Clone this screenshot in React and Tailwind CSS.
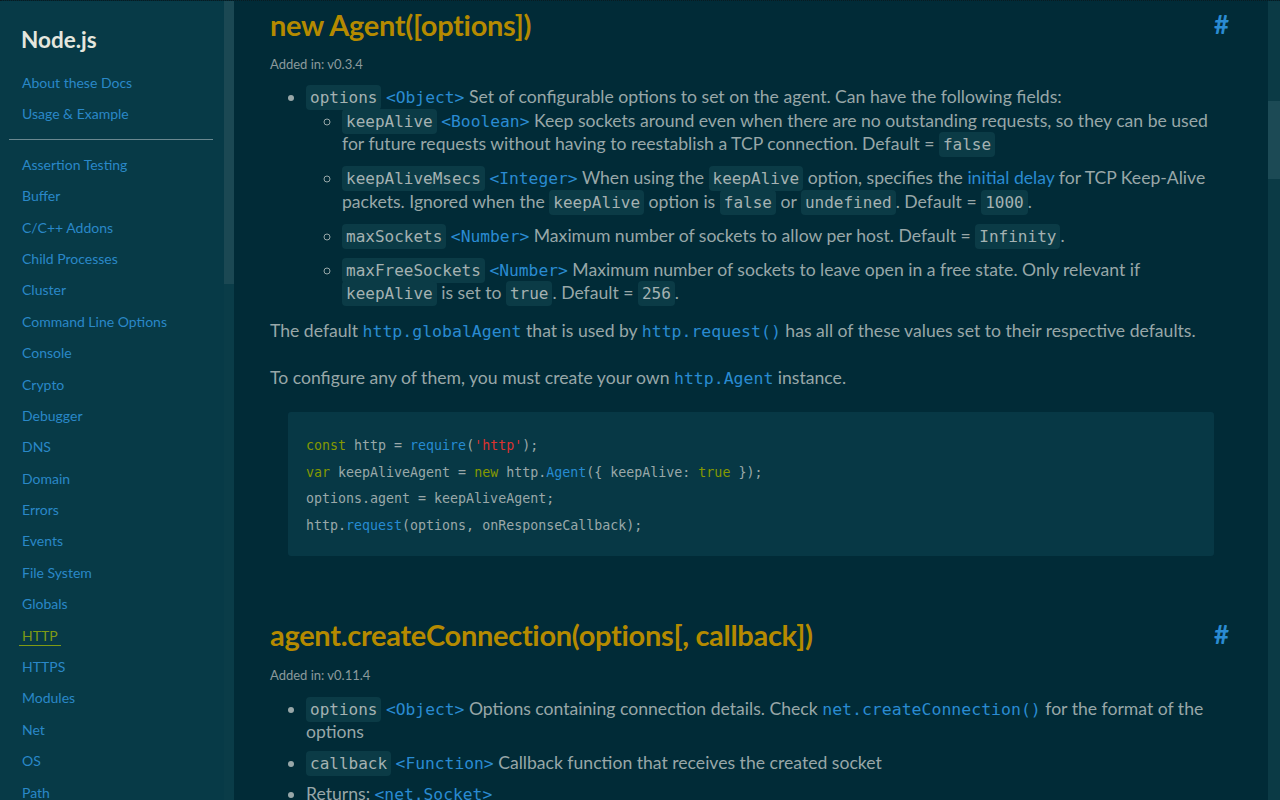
import React from "react";

const sans = { fontFamily: "Lato, 'Open Sans', sans-serif" };

const navTop = ["About these Docs", "Usage & Example"];
const navModules = [
  "Assertion Testing",
  "Buffer",
  "C/C++ Addons",
  "Child Processes",
  "Cluster",
  "Command Line Options",
  "Console",
  "Crypto",
  "Debugger",
  "DNS",
  "Domain",
  "Errors",
  "Events",
  "File System",
  "Globals",
  "HTTP",
  "HTTPS",
  "Modules",
  "Net",
  "OS",
  "Path",
];

function C({ children }) {
  return (
    <code className="rounded-sm bg-[#0b3b46] px-[4px] py-[3px] font-['DejaVu_Sans_Mono',monospace] text-[16px] leading-[16px] text-[#a5b2b2]">
      {children}
    </code>
  );
}

function T({ children }) {
  return (
    <span className="font-['DejaVu_Sans_Mono',monospace] text-[16.3px] leading-[16px] text-[#2a8bd2]">
      &lt;{children}&gt;
    </span>
  );
}

function L({ children }) {
  return (
    <span className="font-['DejaVu_Sans_Mono',monospace] text-[16.5px] leading-[16px] text-[#2a8bd2]">
      {children}
    </span>
  );
}

function Heading({ children }) {
  return (
    <div className="flex items-center justify-between">
      <h2 className="text-[29px] font-bold leading-[44px] tracking-[-0.3px] text-[#b58a00]">
        {children}
      </h2>
      <span className="mr-[3px] text-[26px] font-bold text-[#2a8bd2]">#</span>
    </div>
  );
}

function Sidebar() {
  return (
    <div className="flex w-[234px] shrink-0 bg-[#073a47]">
      <div className="w-[224px] shrink-0 pt-[24px]">
        <div className="pl-[21px] text-[22.5px] font-bold leading-[30px] text-[#e4e6de]">Node.js</div>
        <ul className="mt-[18px] pl-[22px]">
          {navTop.map((n) => (
            <li key={n} className="h-[31.4px] text-[14px] leading-[20px] text-[#2a88c8]">
              {n}
            </li>
          ))}
        </ul>
        <div className="ml-[9px] mr-[11px] mt-[3px] mb-[15px] h-px bg-[#6a8890]" />
        <ul className="pl-[22px]">
          {navModules.map((n) =>
            n === "HTTP" ? (
              <li key={n} className="h-[31.4px] text-[14px] leading-[20px]">
                <span className="-ml-[3px] inline-block border-b border-[#7f9a14] px-[3px] leading-[19px] text-[#7f9a14]">
                  {n}
                </span>
              </li>
            ) : (
              <li key={n} className="h-[31.4px] text-[14px] leading-[20px] text-[#2a88c8]">
                {n}
              </li>
            )
          )}
        </ul>
      </div>
      <div className="w-[10px] shrink-0 bg-[#0a3c48]">
        <div className="h-[283px] w-full bg-[#1b4853]" />
      </div>
    </div>
  );
}

export default function App() {
  return (
    <div
      style={sans}
      className="flex h-[800px] w-[1280px] overflow-hidden border-t border-dotted border-[#0a1a20] bg-[#012b37]"
    >
      <Sidebar />
      <div className="flex-1 overflow-hidden pl-[36px] pr-[36px] pt-[2px] text-[17.6px] leading-[23.5px] text-[#98a7a8]">
        <Heading>new Agent([options])</Heading>
        <div className="mt-[7px] text-[13px] leading-[20px] text-[#8b9a9c]">Added in: v0.3.4</div>
        <ul className="mt-[11px] list-disc pl-[36px]">
          <li>
            <C>options</C> <T>Object</T> Set of configurable options to set on the agent. Can have the
            following fields:
            <ul className="list-[circle] pl-[36px]">
              <li>
                <C>keepAlive</C> <T>Boolean</T> Keep sockets around even when there are no outstanding
                requests, so they can be used for future requests without having to reestablish a TCP
                connection. Default = <C>false</C>
              </li>
              <li className="mt-[10.5px]">
                <C>keepAliveMsecs</C> <T>Integer</T> When using the <C>keepAlive</C> option, specifies the{" "}
                <span className="text-[#2a8bd2]">initial delay</span> for TCP Keep-Alive packets. Ignored
                when the <C>keepAlive</C> option is <C>false</C> or <C>undefined</C>. Default ={" "}
                <C>1000</C>.
              </li>
              <li className="mt-[10.5px]">
                <C>maxSockets</C> <T>Number</T> Maximum number of sockets to allow per host. Default ={" "}
                <C>Infinity</C>.
              </li>
              <li className="mt-[10.5px]">
                <C>maxFreeSockets</C> <T>Number</T> Maximum number of sockets to leave open in a free
                state. Only relevant if <C>keepAlive</C> is set to <C>true</C>. Default = <C>256</C>.
              </li>
            </ul>
          </li>
        </ul>
        <p className="mt-[14px]">
          The default <L>http.globalAgent</L> that is used by <L>http.request()</L> has all of these values
          set to their respective defaults.
        </p>
        <p className="mt-[23.5px]">
          To configure any of them, you must create your own <L>http.Agent</L> instance.
        </p>
        <pre className="mx-[18px] mt-[23px] rounded-[3px] bg-[#073845] px-[18px] pt-[21px] pb-[16px] font-['DejaVu_Sans_Mono',monospace] text-[13.3px] leading-[26.7px] text-[#9aa8a9]">
          <div>
            <span className="text-[#859900]">const</span> http = <span className="text-[#268bd2]">require</span>(
            <span className="text-[#dc322f]">'http'</span>);
          </div>
          <div>
            <span className="text-[#859900]">var</span> keepAliveAgent = <span className="text-[#859900]">new</span>{" "}
            http.<span className="text-[#268bd2]">Agent</span>({"{"} keepAlive:{" "}
            <span className="text-[#859900]">true</span> {"}"});
          </div>
          <div>options.agent = keepAliveAgent;</div>
          <div>
            http.<span className="text-[#268bd2]">request</span>(options, onResponseCallback);
          </div>
        </pre>
        <div className="mt-[57px]">
          <Heading>agent.createConnection(options[, callback])</Heading>
        </div>
        <div className="mt-[8px] text-[13px] leading-[20px] text-[#8b9a9c]">Added in: v0.11.4</div>
        <ul className="mt-[12px] list-disc pl-[36px]">
          <li>
            <C>options</C> <T>Object</T> Options containing connection details. Check{" "}
            <L>net.createConnection()</L> for the format of the options
          </li>
          <li className="mt-[7.5px]">
            <C>callback</C> <T>Function</T> Callback function that receives the created socket
          </li>
          <li className="mt-[7.5px]">
            Returns: <T>net.Socket</T>
          </li>
        </ul>
      </div>
      <div className="w-[12px] shrink-0 bg-[#0b3a45] pt-[100px]">
        <div className="h-[78px] w-full bg-[#1c4a55]" />
      </div>
    </div>
  );
}
